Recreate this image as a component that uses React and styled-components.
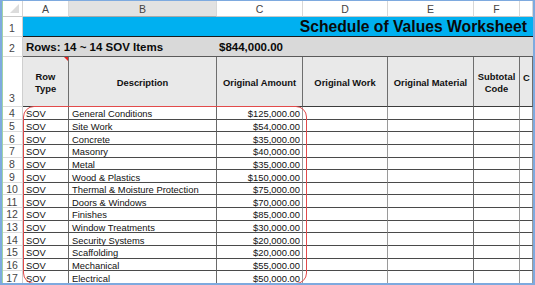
import React from "react";
import styled, { createGlobalStyle, css } from "styled-components";

const GlobalStyle = createGlobalStyle`
  html, body { margin: 0; padding: 0; background: #ffffff; }
  body { font-family: "Liberation Sans", Arial, sans-serif; }
`;

const Frame = styled.div`
  position: relative;
  width: 535px;
  height: 285px;
  box-sizing: border-box;
  border: 2px solid #7eaadf;
  border-top-width: 1px;
  overflow: hidden;
  background: #ffffff;
`;

const Sheet = styled.div`
  display: grid;
  grid-template-columns: 21px 46px 148px 86px 85px 86px 46px 13px;
  grid-template-rows: 16px 20px 20px 50px repeat(14, 12.65px);
  font-family: "Liberation Sans", Arial, sans-serif;
`;

const GreenEdge = styled.div`
  position: absolute;
  left: 0;
  top: 0;
  bottom: 0;
  width: 1px;
  background: #9fd3a8;
`;

const Corner = styled.div`
  position: relative;
  box-sizing: border-box;
  background: #ffffff;
  border-right: 1px solid #d4d4d4;
  border-bottom: 1px solid #c8c8c8;
  &::after {
    content: "";
    position: absolute;
    right: 3px;
    bottom: 3px;
    width: 0;
    height: 0;
    border-left: 9px solid transparent;
    border-bottom: 9px solid #dcdcdc;
  }
`;

const ColHead = styled.div`
  box-sizing: border-box;
  display: flex;
  align-items: center;
  justify-content: center;
  font-size: 10.5px;
  color: #444;
  background: ${(p) => (p.$selected ? "#e2e2e2" : "#ffffff")};
  border-right: 1px solid #d8d8d8;
  border-bottom: 1px solid ${(p) => (p.$selected ? "#a9a9a9" : "#c8c8c8")};
  padding-top: 1px;
`;

const RowNum = styled.div`
  box-sizing: border-box;
  display: flex;
  justify-content: center;
  align-items: ${(p) => (p.$bottom ? "flex-end" : "center")};
  font-size: 10.5px;
  line-height: 11px;
  color: #444;
  background: #ffffff;
  border-right: 1px solid #cfcfcf;
  border-bottom: 1px solid #dadada;
  padding-bottom: ${(p) => (p.$bottom ? "2px" : "0")};
  padding-top: ${(p) => (p.$bottom ? "0" : "2px")};
`;

const TitleCell = styled.div`
  grid-column: 2 / -1;
  box-sizing: border-box;
  display: flex;
  align-items: center;
  justify-content: flex-end;
  background: #00b0f0;
  border-bottom: 1px solid #1a1a1a;
  padding-right: 6px;
  font-size: 15.7px;
  font-weight: bold;
  color: #0a0a0a;
  white-space: nowrap;
  overflow: hidden;
`;

const SummaryCell = styled.div`
  grid-column: ${(p) => p.$span};
  box-sizing: border-box;
  display: flex;
  align-items: center;
  background: #d9d9d9;
  border-bottom: 1px solid #5a5a5a;
  padding-left: ${(p) => p.$pad || "3px"};
  padding-top: 1px;
  font-size: 11.5px;
  font-weight: bold;
  color: #0a0a0a;
  white-space: nowrap;
`;

const HeadCell = styled.div`
  position: relative;
  box-sizing: border-box;
  display: flex;
  align-items: center;
  justify-content: ${(p) => (p.$left ? "flex-start" : "center")};
  text-align: center;
  background: #e9e9e9;
  border-right: 1px solid #6e6e6e;
  border-bottom: 1px solid #3c3c3c;
  padding: ${(p) => (p.$left ? "3px 0 0 3px" : "3px 2px 0")};
  font-size: 9.4px;
  line-height: 12.5px;
  font-weight: bold;
  color: #111;
  overflow: hidden;
  white-space: ${(p) => (p.$left ? "nowrap" : "normal")};
  ${(p) =>
    p.$shiftUp &&
    css`
      align-items: flex-start;
      padding-top: 15px;
    `}
`;

const CommentMark = styled.span`
  position: absolute;
  top: 0;
  right: 0;
  width: 0;
  height: 0;
  border-left: 4px solid transparent;
  border-top: 4px solid #e8231f;
`;

const DataCell = styled.div`
  box-sizing: border-box;
  display: flex;
  align-items: center;
  justify-content: ${(p) => (p.$right ? "flex-end" : "flex-start")};
  background: #ffffff;
  border-right: 1px solid ${(p) => (p.$dark ? "#6a6a6a" : "#9a9a9a")};
  border-bottom: 1px solid #4a4a4a;
  padding: ${(p) => (p.$right ? "2px 2px 0 0" : "2px 0 0 3px")};
  font-size: 9.4px;
  line-height: 11px;
  color: #111;
  white-space: nowrap;
  overflow: hidden;
`;

const Highlight = styled.div`
  position: absolute;
  left: 21px;
  top: 105px;
  width: 284px;
  height: 178px;
  box-sizing: border-box;
  border: 1.6px solid #e24a4a;
  border-radius: 11px;
  pointer-events: none;
`;

const columns = ["A", "B", "C", "D", "E", "F", ""];

const items = [
  ["General Conditions", "$125,000.00"],
  ["Site Work", "$54,000.00"],
  ["Concrete", "$35,000.00"],
  ["Masonry", "$40,000.00"],
  ["Metal", "$35,000.00"],
  ["Wood & Plastics", "$150,000.00"],
  ["Thermal & Moisture Protection", "$75,000.00"],
  ["Doors & Windows", "$70,000.00"],
  ["Finishes", "$85,000.00"],
  ["Window Treatments", "$30,000.00"],
  ["Security Systems", "$20,000.00"],
  ["Scaffolding", "$20,000.00"],
  ["Mechanical", "$55,000.00"],
  ["Electrical", "$50,000.00"],
];

export default function App() {
  return (
    <>
      <GlobalStyle />
      <Frame>
        <Sheet>
          <Corner />
          {columns.map((c, i) => (
            <ColHead key={i} $selected={c === "B"}>
              {c}
            </ColHead>
          ))}

          <RowNum $bottom>1</RowNum>
          <TitleCell>Schedule of Values Worksheet</TitleCell>

          <RowNum $bottom>2</RowNum>
          <SummaryCell $span="2 / 4">Rows: 14 ~ 14 SOV Items</SummaryCell>
          <SummaryCell $span="4 / -1" $pad="2px">
            $844,000.00
          </SummaryCell>

          <RowNum $bottom>3</RowNum>
          <HeadCell>
            Row Type
            <CommentMark />
          </HeadCell>
          <HeadCell>Description</HeadCell>
          <HeadCell>Original Amount</HeadCell>
          <HeadCell>Original Work</HeadCell>
          <HeadCell>Original Material</HeadCell>
          <HeadCell>Subtotal Code</HeadCell>
          <HeadCell $left $shiftUp>
            C
          </HeadCell>

          {items.map(([desc, amt], i) => (
            <React.Fragment key={i}>
              <RowNum>{i + 4}</RowNum>
              <DataCell $dark>SOV</DataCell>
              <DataCell $dark>{desc}</DataCell>
              <DataCell $right>{amt}</DataCell>
              <DataCell />
              <DataCell $dark />
              <DataCell />
              <DataCell />
            </React.Fragment>
          ))}
        </Sheet>
        <GreenEdge />
        <Highlight />
      </Frame>
    </>
  );
}
